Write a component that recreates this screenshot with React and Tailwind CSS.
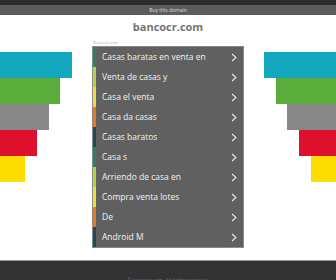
import React from "react";

const STRIPS = ["bg-[#2f8068]", "bg-[#b9cf46]", "bg-[#f0dc3e]", "bg-[#e07a26]", "bg-[#1f4a56]"];

const LINKS = [
  "Casas baratas en venta en",
  "Venta de casas y",
  "Casa el venta",
  "Casa da casas",
  "Casas baratos",
  "Casa s",
  "Arriendo de casa en",
  "Compra venta lotes",
  "De",
  "Android M",
];

// stair bars on both sides
const BARS = [
  { color: "bg-[#14a8bf]", w: "w-[72px]" },
  { color: "bg-[#5cac3c]", w: "w-[60px]" },
  { color: "bg-[#878787]", w: "w-[49px]" },
  { color: "bg-[#df0f2e]", w: "w-[37px]" },
  { color: "bg-[#fddc00]", w: "w-[25px]" },
];

function Chevron() {
  return (
    <svg width="6" height="9" viewBox="0 0 6 9" className="shrink-0">
      <polyline points="1,1 5,4.5 1,8" fill="none" stroke="#e8e8e8" strokeWidth="1.1" />
    </svg>
  );
}

export default function App() {
  return (
    <div
      className="w-[336px] h-[280px] flex flex-col bg-white overflow-hidden"
      style={{ fontFamily: '"Open Sans", "Liberation Sans", sans-serif' }}
    >
      <div className="h-[5px] bg-[#2e2e2e]" />
      <div className="h-[10px] bg-[#5c5c5c] flex items-center justify-center text-[5px] leading-none text-[#dcdcdc]">
        Buy this domain
      </div>
      <div className="h-[25px] flex items-center justify-center text-[11px] font-bold text-[#747474]">
        bancocr.com
      </div>

      <div className="flex flex-1">
        {/* left stairs */}
        <div className="w-[92px] pt-[12px] flex flex-col">
          {BARS.map((b) => (
            <div key={b.color} className={`h-[26px] ${b.color} ${b.w}`} />
          ))}
        </div>

        {/* related links */}
        <div className="w-[152px] flex flex-col">
          <div className="h-[6px] pl-[1px] text-[4px] leading-[6px] text-[#b0b0b0]">Related Links</div>
          <div className="border border-[#8a8a8a] bg-[#606060] flex flex-col">
            {LINKS.map((t, i) => (
              <div key={t} className="h-[20px] flex items-center">
                <div className={`w-[3px] self-stretch ${STRIPS[i % 5]}`} />
                <span className="flex-1 pl-[6px] text-[8.5px] text-[#f2f2f2] whitespace-nowrap">{t}</span>
                <div className="pr-[6px]">
                  <Chevron />
                </div>
              </div>
            ))}
          </div>
        </div>

        {/* right stairs */}
        <div className="w-[92px] pt-[12px] flex flex-col items-end">
          {BARS.map((b) => (
            <div key={b.color} className={`h-[26px] ${b.color} ${b.w}`} />
          ))}
        </div>
      </div>

      <div className="h-[20px] border-t border-[#9a9a9a] bg-[#333333] pt-[15px] text-center text-[5px] leading-[8px] text-[#6a6a6a]">
        © bancocr.com. All rights reserved.
      </div>
    </div>
  );
}
